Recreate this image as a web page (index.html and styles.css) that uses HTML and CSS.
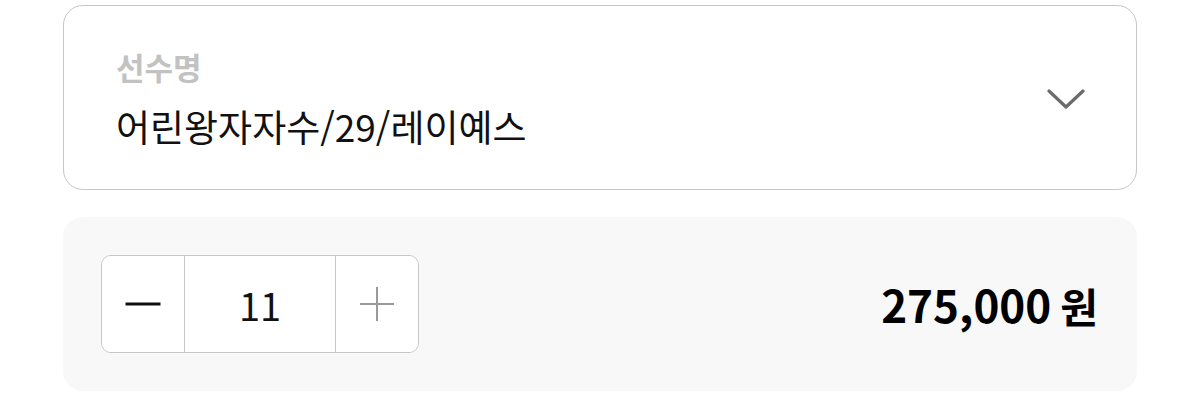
FILE: index.html
```html
<!DOCTYPE html>
<html lang="ko">
<head>
  <meta charset="UTF-8">
  <meta name="viewport" content="width=device-width, initial-scale=1.0">
  <title>선수 선택</title>
  <link rel="stylesheet" href="styles.css">
</head>
<body>
<div class="select-box">
  <div class="select-text">
    <span class="select-label">선수명</span>
    <span class="select-value">어린왕자자수/29/레이예스</span>
  </div>
  <svg class="chevron" width="38" height="24" viewBox="0 0 38 24">
    <path d="M2 3 L19 19 L36 3" fill="none" stroke="#6b6b6b" stroke-width="3.2" stroke-linecap="round" stroke-linejoin="round"/>
  </svg>
</div>

<div class="order-box">
  <div class="stepper">
    <button class="step-btn minus"><span class="bar"></span></button>
    <div class="qty">11</div>
    <button class="step-btn plus"><span class="bar h"></span><span class="bar v"></span></button>
  </div>
  <div class="price">275,000<span class="won">원</span></div>
</div>
</body>
</html>
```

FILE: styles.css
```css
body {
    margin: 0;
    background-color: #ffffff;
    font-family: "Noto Sans CJK KR", "Noto Sans", sans-serif;
    color: #111111;
}

.select-box {
    margin: 5px 63px 0;
    height: 185px;
    box-sizing: border-box;
    border: 1px solid #c6c6c6;
    border-radius: 20px;
    padding: 0 52px 0 52px;
    display: flex;
    align-items: center;
    justify-content: space-between;
}

.select-text {
    display: flex;
    flex-direction: column;
    gap: 26px;
}

.select-label {
    font-size: 31px;
    font-weight: bold;
    color: #c2c2c2;
    line-height: 31px;
}

.select-value {
    font-size: 37px;
    line-height: 37px;
    color: #111111;
}

.chevron {
    margin-right: -1px;
    margin-top: 4px;
}

.order-box {
    margin: 27px 63px 0;
    height: 174px;
    box-sizing: border-box;
    background-color: #f8f8f8;
    border-radius: 20px;
    padding: 0 39px 0 38px;
    display: flex;
    align-items: center;
    justify-content: space-between;
}

.stepper {
    display: flex;
    height: 98px;
    box-sizing: border-box;
    border: 1px solid #c6c6c6;
    border-radius: 10px;
    background-color: #ffffff;
    overflow: hidden;
}

.step-btn {
    width: 82px;
    border: none;
    background: #ffffff;
    padding: 0;
    position: relative;
    cursor: pointer;
}

.bar {
    position: absolute;
    left: 50%;
    top: 50%;
    background-color: #111111;
}

.minus .bar {
    width: 35px;
    height: 3px;
    transform: translate(-50%, -50%);
}

.plus .bar {
    background-color: #9a9a9a;
}

.plus .bar.h {
    width: 34px;
    height: 2px;
    transform: translate(-50%, -50%);
}

.plus .bar.v {
    width: 2px;
    height: 34px;
    transform: translate(-50%, -50%);
}

.qty {
    width: 150px;
    border-left: 1px solid #c6c6c6;
    border-right: 1px solid #c6c6c6;
    display: flex;
    align-items: center;
    justify-content: center;
    font-size: 38px;
    color: #111111;
}

.price {
    font-size: 44px;
    font-weight: bold;
    color: #000000;
    line-height: 1;
}

.won {
    margin-left: 9px;
    font-size: 41px;
}
```
